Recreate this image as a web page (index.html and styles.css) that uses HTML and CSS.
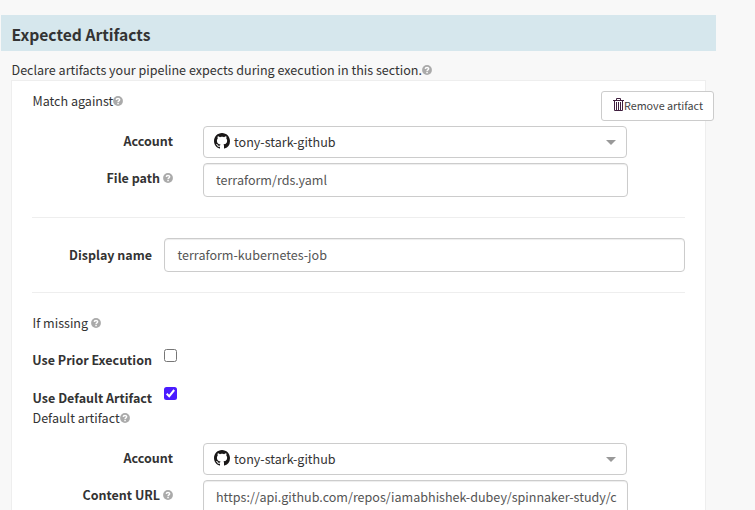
FILE: index.html
```html
<!DOCTYPE html>
<html lang="en">
<head>
<meta charset="utf-8">
<title>Expected Artifacts</title>
<link rel="stylesheet" href="styles.css">
</head>
<body>
<svg class="defs" aria-hidden="true">
  <symbol id="help" viewBox="0 0 10 10"><circle cx="5" cy="5" r="4.900" fill="#aaa"/><path fill="none" stroke="#fff" stroke-width="1.400" d="M3.200 3.800C3.400 2.100 6.700 2 6.700 3.800 6.700 4.900 5.100 4.800 5.100 6.100"/><path fill="#fff" d="M4.300 6.800h1.500v1.400H4.300z"/></symbol>
  <symbol id="github" viewBox="0 0 16 16"><path fill="#191717" fill-rule="evenodd" d="M8 0C3.58 0 0 3.58 0 8c0 3.54 2.29 6.53 5.47 7.59.4.07.55-.17.55-.38 0-.19-.01-.82-.01-1.49-2.01.37-2.53-.49-2.69-.94-.09-.23-.48-.94-.82-1.13-.28-.15-.68-.52-.01-.53.63-.01 1.08.58 1.23.82.72 1.21 1.87.87 2.33.66.07-.52.28-.87.51-1.07-1.78-.2-3.64-.89-3.64-3.95 0-.87.31-1.59.82-2.15-.08-.2-.36-1.02.08-2.12 0 0 .67-.21 2.2.82.64-.18 1.32-.27 2-.27s1.36.09 2 .27c1.53-1.04 2.2-.82 2.2-.82.44 1.1.16 1.92.08 2.12.51.56.82 1.27.82 2.15 0 3.07-1.87 3.75-3.65 3.95.29.25.54.73.54 1.48 0 1.07-.01 1.93-.01 2.2 0 .21.15.46.55.38A8.01 8.01 0 0 0 16 8c0-4.42-3.58-8-8-8z"/></symbol>
</svg>
<main class="page">
  <h4 class="heading">Expected Artifacts</h4>
  <p class="intro"><span>Declare artifacts your pipeline expects during execution in this section.</span><svg class="help"><use href="#help"/></svg></p>
  <section class="panel">
    <div class="top">
      <p class="text"><span>Match against</span><svg class="help"><use href="#help"/></svg></p>
      <button class="remove"><svg class="trash" viewBox="0 0 11 14"><path fill="none" stroke="#40203f" d="M0 2.500h11M3.500 2V.5h4V2M1.500 3v9.500h8V3M3.500 4v8M5.500 4v8M7.500 4v8"/></svg><span>Remove artifact</span></button>
    </div>
    <div class="row">
      <div class="label"><span>Account</span></div>
      <div class="select"><svg class="github"><use href="#github"/></svg><span>tony-stark-github</span><i class="caret"></i></div>
    </div>
    <div class="row">
      <div class="label"><span>File path</span><svg class="help spaced"><use href="#help"/></svg></div>
      <div class="input"><span>terraform/rds.yaml</span></div>
    </div>
    <hr>
    <div class="row wide">
      <div class="label"><span>Display name</span></div>
      <div class="input"><span>terraform-kubernetes-job</span></div>
    </div>
    <hr>
    <p class="text missing"><span>If missing</span><svg class="help spaced"><use href="#help"/></svg></p>
    <div class="check">
      <div class="label"><span>Use Prior Execution</span></div>
      <i class="box"></i>
    </div>
    <div class="check">
      <div class="label"><span>Use Default Artifact</span></div>
      <i class="box checked"><svg viewBox="0 0 13 13"><path fill="none" stroke="#fff" stroke-width="2" d="M2.700 6.800 5.200 9.200 10.200 3"/></svg></i>
    </div>
    <p class="text default"><span>Default artifact</span><svg class="help"><use href="#help"/></svg></p>
    <div class="row">
      <div class="label"><span>Account</span></div>
      <div class="select"><svg class="github"><use href="#github"/></svg><span>tony-stark-github</span><i class="caret"></i></div>
    </div>
    <div class="row">
      <div class="label"><span>Content URL</span><svg class="help spaced"><use href="#help"/></svg></div>
      <div class="input"><span>https://api.github.com/repos/iamabhishek-dubey/spinnaker-study/c</span></div>
    </div>
  </section>
</main>
</body>
</html>
```
FILE: styles.css
```css
* { box-sizing: border-box; }
html, body { height: 100%; }
body {
  margin: 0;
  overflow: hidden;
  background: #f8f8f8;
  color: #333;
  font: 12.55px/20px "Noto Sans CJK SC", "Noto Sans", sans-serif;
}
p, h4 { margin: 0; }
span { white-space: nowrap; }
.defs { position: absolute; width: 0; height: 0; }
.page { width: 716px; padding: 15px 0 0 1px; }
.heading {
  height: 36px;
  padding: 0 10.5px;
  background: #d6e7ed;
  font-size: 15.65px;
  font-weight: 700;
  line-height: 39px;
}
.intro { display: flex; align-items: center; height: 20px; margin: 9px 0 0 10.5px; }
.help { flex: none; width: 10px; height: 10px; }
.spaced { margin-left: 3px; }
.panel {
  width: 695px;
  height: 450px;
  margin-left: 10px;
  padding: 10px 20px 0;
  background: #fff;
  border: 1px solid #eee;
}
.top { display: flex; justify-content: space-between; height: 35px; margin-right: -29px; }
.text { display: flex; align-items: center; height: 20px; padding-left: .5px; }
.remove {
  display: flex;
  align-items: center;
  width: 113px;
  height: 30px;
  padding: 0 11px 1px;
  border: 1px solid #ccc;
  border-radius: 3px;
  background: #fff;
  color: #444;
  font: 10.75px/16px "Noto Sans CJK SC", "Noto Sans", sans-serif;
}
.trash { flex: none; width: 11px; height: 14px; margin-top: -1px; }
.row { display: flex; margin-bottom: 5px; }
.label {
  display: flex;
  align-items: center;
  justify-content: flex-end;
  flex: none;
  width: 141px;
  height: 30px;
  font-size: 12.5px;
  font-weight: 700;
}
.select, .input {
  display: flex;
  align-items: center;
  width: 425px;
  height: 34px;
  margin-left: 30px;
  padding: 0 12px;
  border: 1px solid #ccc;
  border-radius: 4px;
  background: #fff;
}
.input { box-shadow: inset 0 1px 1px rgba(0, 0, 0, .075); color: #555; }
.select { width: 424px; height: 32px; padding: 0 10px; }
.github { width: 16px; height: 16px; margin: 0 4px 2px 0; }
.caret {
  margin-left: auto;
  border: 5px solid transparent;
  border-top-color: #999;
  border-bottom: 0;
}
hr { height: 1px; margin: 20px 0; border: 0; background: #eee; }
.wide { margin: 0; }
.wide .label { width: 120px; height: 34px; }
.wide .input { width: 521px; margin-left: 12px; padding: 0 12.5px; }
.missing { margin-bottom: 16px; }
.check { display: flex; height: 20px; margin-bottom: 18px; }
.check .label { width: 120px; height: 22px; }
.box {
  width: 13px;
  height: 13px;
  margin-left: 12px;
  border: 1px solid #767676;
  border-radius: 2.500px;
}
.checked { border: 0; background: #4a1cff; }
.checked svg { display: block; width: 13px; height: 13px; }
.default { margin: -17px 0 15px; }
```
